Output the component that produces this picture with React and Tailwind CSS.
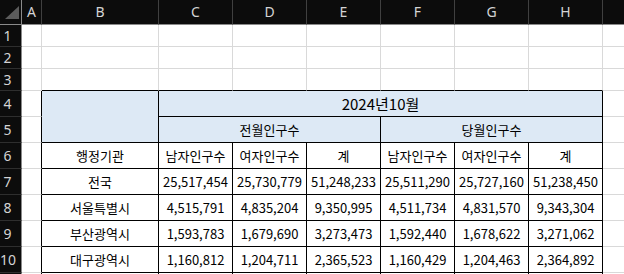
import React from "react";

const LETTERS = ["A", "B", "C", "D", "E", "F", "G", "H", ""];

const DATA = [
  ["전국", "25,517,454", "25,730,779", "51,248,233", "25,511,290", "25,727,160", "51,238,450"],
  ["서울특별시", "4,515,791", "4,835,204", "9,350,995", "4,511,734", "4,831,570", "9,343,304"],
  ["부산광역시", "1,593,783", "1,679,690", "3,273,473", "1,592,440", "1,678,622", "3,271,062"],
  ["대구광역시", "1,160,812", "1,204,711", "2,365,523", "1,160,429", "1,204,463", "2,364,892"],
];

const HEAD_FONT = { fontFamily: '"Noto Sans", "Liberation Sans", sans-serif' };

function RowHead({ n }) {
  return (
    <div
      className="flex items-center bg-[#0c0c0c] border-r border-b border-r-[#8a8a8a] border-b-[#2e2e2e] text-[14px] text-[#d4d4d4] leading-none"
      style={HEAD_FONT}
    >
      <span className="w-[15px] text-center">{n}</span>
    </div>
  );
}

function Cell({ className = "", children }) {
  return (
    <div className={"flex items-center justify-center border-r border-b whitespace-nowrap " + className}>
      {children}
    </div>
  );
}

export default function App() {
  const cellFont = { fontFamily: '"Noto Sans CJK KR", "Noto Sans", sans-serif' };
  return (
    <div className="w-[624px] h-[274px] overflow-hidden bg-white">
      <div
        className="grid grid-cols-[22px_20px_117px_74px_74px_74px_74px_74px_74px_74px] grid-rows-[25px_22px_22px_22px_26px_26px_26px_26px_26px_26px_26px_26px] text-[13px] text-black leading-none"
        style={cellFont}
      >
        {/* header row */}
        <div className="relative bg-[#0c0c0c] border-r border-b border-r-[#8a8a8a] border-b-[#8a8a8a]">
          <svg width="22" height="24" className="absolute left-0 top-0">
            <polygon points="19,6 19,19 5,19" fill="#5c5c5c" />
          </svg>
        </div>
        {LETTERS.map((l, i) => (
          <div
            key={i}
            className="flex items-center justify-center bg-[#0c0c0c] border-r border-b border-r-[#404040] border-b-[#8a8a8a] text-[14px] text-[#d4d4d4]"
            style={HEAD_FONT}
          >
            {l}
          </div>
        ))}

        {/* rows 1-2 */}
        {[1, 2].map((r) => (
          <React.Fragment key={r}>
            <RowHead n={r} />
            {LETTERS.map((_, i) => (
              <Cell key={i} className="border-[#d9d9d9]" />
            ))}
          </React.Fragment>
        ))}

        {/* row 3 */}
        <RowHead n={3} />
        <Cell className="border-[#d9d9d9]" />
        {[0, 1, 2, 3, 4, 5, 6].map((i) => (
          <Cell key={i} className="border-r-[#d9d9d9] border-b-black" />
        ))}
        <Cell className="border-[#d9d9d9]" />

        {/* row 4 */}
        <RowHead n={4} />
        <Cell className="border-r-black border-b-[#d9d9d9]" />
        <Cell className="row-span-2 bg-[#dde9f5] border-black" />
        <Cell className="col-span-6 bg-[#dde9f5] border-black text-[15px]">2024년10월</Cell>
        <Cell className="border-[#d9d9d9]" />

        {/* row 5 */}
        <RowHead n={5} />
        <Cell className="border-r-black border-b-[#d9d9d9]" />
        <Cell className="col-span-3 bg-[#dde9f5] border-black">전월인구수</Cell>
        <Cell className="col-span-3 bg-[#dde9f5] border-black">당월인구수</Cell>
        <Cell className="border-[#d9d9d9]" />

        {/* row 6 */}
        <RowHead n={6} />
        <Cell className="border-r-black border-b-[#d9d9d9]" />
        {["행정기관", "남자인구수", "여자인구수", "계", "남자인구수", "여자인구수", "계"].map((t, i) => (
          <Cell key={i} className="border-black">{t}</Cell>
        ))}
        <Cell className="border-[#d9d9d9]" />

        {/* rows 7-10 */}
        {DATA.map((row, r) => (
          <React.Fragment key={r}>
            <RowHead n={7 + r} />
            <Cell className="border-r-black border-b-[#d9d9d9]" />
            {row.map((t, i) => (
              <Cell key={i} className="border-black">{t}</Cell>
            ))}
            <Cell className="border-[#d9d9d9]" />
          </React.Fragment>
        ))}

        {/* row 11 (only its top edge is in view) */}
        <RowHead n="" />
        <Cell className="border-r-black border-b-[#d9d9d9]" />
        {[0, 1, 2, 3, 4, 5, 6].map((i) => (
          <Cell key={i} className="border-black" />
        ))}
        <Cell className="border-[#d9d9d9]" />
      </div>
    </div>
  );
}
